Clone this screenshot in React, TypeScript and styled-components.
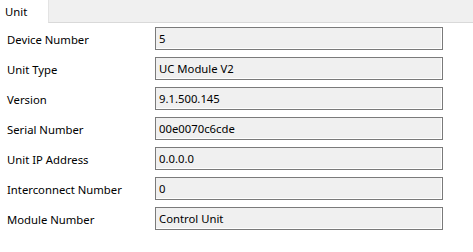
import { Fragment } from 'react';
import styled, { createGlobalStyle } from 'styled-components';

const GlobalStyle = createGlobalStyle`
    body {
        margin: 0;
        background: #ffffff;
        font-family: "Segoe UI", "Noto Sans", "Liberation Sans", sans-serif;
        font-size: 11.3px;
        color: #000000;
    }
`;

const StyledPage = styled.div`
    width: 473px;
    height: 252px;
    background: #ffffff;
`;

const StyledTabBar = styled.div`
    display: flex;
    height: 23px;
`;

const StyledTab = styled.div`
    width: 48px;
    padding: 1px 0 0 5px;
    box-sizing: border-box;
    line-height: 21px;
    background: #ffffff;
`;

const StyledTabFiller = styled.div`
    flex: 1;
    background: #f0f0f0;
    border-left: 1px solid #e3e3e3;
    border-bottom: 1px solid #d9d9d9;
`;

const StyledForm = styled.div`
    display: grid;
    grid-template-columns: 148px 288px;
    row-gap: 7px;
    padding: 4px 0 0 7px;
    align-items: center;
`;

const StyledLabel = styled.div`
    padding-top: 2px;
    white-space: nowrap;
`;

const StyledField = styled.div`
    height: 23px;
    box-sizing: border-box;
    padding: 1px 3px 0;
    line-height: 19px;
    background: #f0f0f0;
    border: 1px solid #7a7a7a;
    box-shadow: inset -1px -1px 0 #ffffff;
`;

const rows = [
    ['Device Number', '5'],
    ['Unit Type', 'UC Module V2'],
    ['Version', '9.1.500.145'],
    ['Serial Number', '00e0070c6cde'],
    ['Unit IP Address', '0.0.0.0'],
    ['Interconnect Number', '0'],
    ['Module Number', 'Control Unit'],
];

const App = () => {
    return (
        <StyledPage>
            <GlobalStyle />
            <StyledTabBar>
                <StyledTab>Unit</StyledTab>
                <StyledTabFiller />
            </StyledTabBar>
            <StyledForm>
                {rows.map(([label, value]) => (
                    <Fragment key={label}>
                        <StyledLabel>{label}</StyledLabel>
                        <StyledField>{value}</StyledField>
                    </Fragment>
                ))}
            </StyledForm>
        </StyledPage>
    );
};

export default App;
